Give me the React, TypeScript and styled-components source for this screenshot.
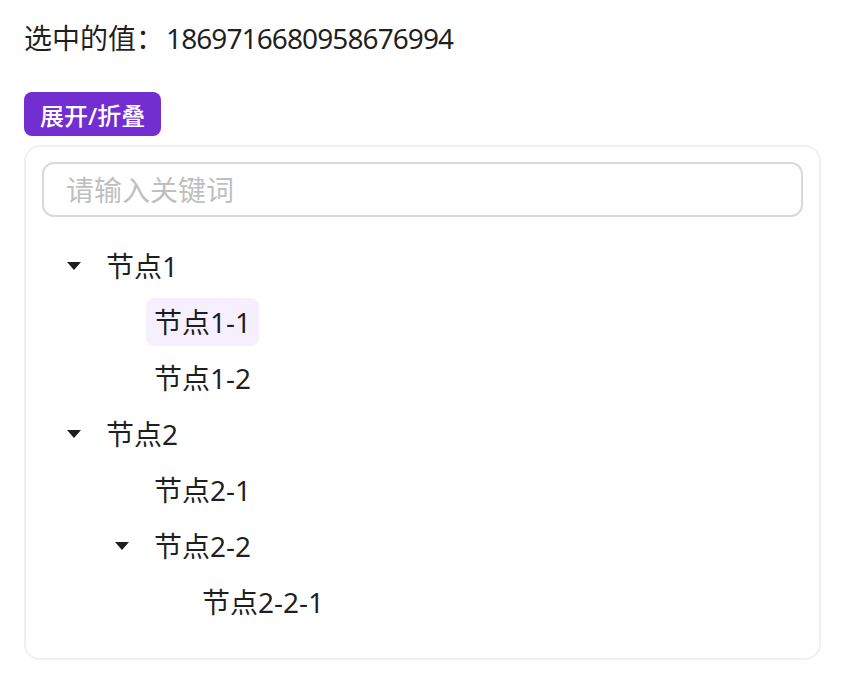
import React, { useState } from 'react';
import styled, { createGlobalStyle } from 'styled-components';

type TreeNode = { key: string; title: string; children?: TreeNode[] };

const treeData: TreeNode[] = [
  {
    key: '1',
    title: '节点1',
    children: [
      { key: '1869716680958676994', title: '节点1-1' },
      { key: '1-2', title: '节点1-2' },
    ],
  },
  {
    key: '2',
    title: '节点2',
    children: [
      { key: '2-1', title: '节点2-1' },
      { key: '2-2', title: '节点2-2', children: [{ key: '2-2-1', title: '节点2-2-1' }] },
    ],
  },
];

const parentKeys = (nodes: TreeNode[]): string[] =>
  nodes.flatMap((n) => (n.children ? [n.key, ...parentKeys(n.children)] : []));

const GlobalStyle = createGlobalStyle`
  body {
    margin: 0;
    background: #ffffff;
    font-family: 'Noto Sans', 'Noto Sans CJK SC', sans-serif;
    color: rgba(0, 0, 0, 0.88);
  }
`;

const App = () => {
  const [expanded, setExpanded] = useState<string[]>(parentKeys(treeData));
  const [selected, setSelected] = useState('1869716680958676994');
  const [keyword, setKeyword] = useState('');

  const toggleAll = () => {
    setExpanded(expanded.length ? [] : parentKeys(treeData));
  };

  const toggle = (key: string) => {
    setExpanded(expanded.includes(key) ? expanded.filter((k) => k !== key) : [...expanded, key]);
  };

  const renderNodes = (nodes: TreeNode[], level: number): React.ReactNode =>
    nodes
      .filter((n) => !keyword || n.title.includes(keyword) || n.children)
      .map((node) => (
        <React.Fragment key={node.key}>
          <Row>
            <Indent $level={level} />
            <Switcher onClick={() => node.children && toggle(node.key)}>
              {node.children && (
                <Caret $open={expanded.includes(node.key)} viewBox="0 0 14 8">
                  <polygon points="0,0 14,0 7,8" />
                </Caret>
              )}
            </Switcher>
            <Title $active={selected === node.key} onClick={() => setSelected(node.key)}>
              {node.title}
            </Title>
          </Row>
          {node.children && expanded.includes(node.key) && renderNodes(node.children, level + 1)}
        </React.Fragment>
      ));

  return (
    <Page>
      <GlobalStyle />
      <Selected>
        选中的值：<Value>{selected}</Value>
      </Selected>
      <Button onClick={toggleAll}>展开/折叠</Button>
      <Card>
        <Search
          placeholder="请输入关键词"
          value={keyword}
          onChange={(e) => setKeyword(e.target.value)}
        />
        <Tree>{renderNodes(treeData, 0)}</Tree>
      </Card>
    </Page>
  );
};

const Page = styled.div`
  padding: 16px 30px 0 24px;
  display: flex;
  flex-direction: column;
  align-items: flex-start;
`;

const Selected = styled.div`
  font-size: 28px;
  line-height: 44px;
  margin-bottom: 32px;
`;

const Value = styled.span`
  margin-left: 2px;
  letter-spacing: -0.9px;
`;

const Button = styled.button`
  height: 44px;
  padding: 0 16px;
  border: none;
  border-radius: 8px;
  background: #722ed1;
  color: #ffffff;
  font-family: 'Noto Sans', 'Noto Sans CJK SC', sans-serif;
  font-size: 24px;
  font-weight: 500;
  cursor: pointer;
  margin-bottom: 9px;
`;

const Card = styled.div`
  box-sizing: border-box;
  width: 797px;
  border: 2px solid #f0f0f0;
  border-radius: 16px;
  padding: 15px 16px 24px;
  display: flex;
  flex-direction: column;
`;

const Search = styled.input`
  box-sizing: border-box;
  height: 55px;
  border: 2px solid #d9d9d9;
  border-radius: 12px;
  padding: 0 22px;
  font-family: 'Noto Sans', 'Noto Sans CJK SC', sans-serif;
  font-size: 28px;
  color: rgba(0, 0, 0, 0.88);
  outline: none;
  margin-bottom: 25px;

  &::placeholder {
    color: #bfbfbf;
  }
`;

const Tree = styled.div`
  display: flex;
  flex-direction: column;
  padding-left: 8px;
`;

const Row = styled.div`
  display: flex;
  align-items: center;
  height: 48px;
  margin-bottom: 8px;
`;

const Indent = styled.span<{ $level: number }>`
  width: ${(p) => p.$level * 48}px;
  flex-shrink: 0;
`;

const Switcher = styled.span`
  width: 48px;
  height: 48px;
  flex-shrink: 0;
  display: flex;
  align-items: center;
  justify-content: center;
  cursor: pointer;
`;

const Caret = styled.svg<{ $open: boolean }>`
  width: 14px;
  height: 8px;
  fill: #1f1f1f;
  transform: rotate(${(p) => (p.$open ? 0 : -90)}deg);
`;

const Title = styled.span<{ $active: boolean }>`
  height: 48px;
  line-height: 48px;
  padding: 0 8px;
  border-radius: 8px;
  font-size: 28px;
  white-space: nowrap;
  cursor: pointer;
  background: ${(p) => (p.$active ? '#f6effe' : 'transparent')};
`;

export default App;
